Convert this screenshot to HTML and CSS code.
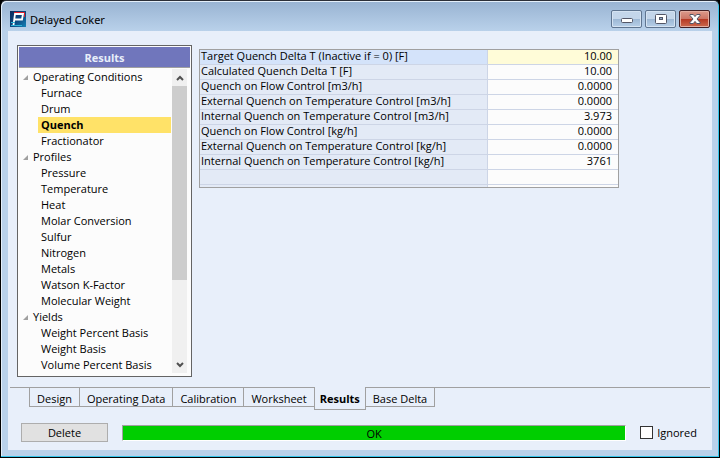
FILE: index.html
```html
<!DOCTYPE html>
<html lang="en">
<head>
<meta charset="utf-8">
<title>Delayed Coker</title>
<link rel="stylesheet" href="styles.css">
</head>
<body>
<div class="window">
  <header class="titlebar">
    <svg class="app-icon" viewBox="0 0 16 16" aria-hidden="true">
      <defs>
        <linearGradient id="appbg" x1="0" y1="0" x2="1" y2="1"><stop offset="0" stop-color="#0b2a5c"/><stop offset=".55" stop-color="#0d4a82"/><stop offset="1" stop-color="#1684b8"/></linearGradient>
      </defs>
      <rect width="16" height="16" fill="url(#appbg)"/>
      <path d="M4 1.500H14.500V6" fill="none" stroke="#e0202c" stroke-width="1"/>
      <path d="M3.500 14L5 3H13L12 8.500H5" fill="none" stroke="#fff" stroke-width="1.800"/>
      <path d="M1 14.500H12M1 11.500H5" fill="none" stroke="#2fb4d8" stroke-width="1"/>
    </svg>
    <h1 class="title">Delayed Coker</h1>
    <div class="controls">
      <button class="control" type="button" aria-label="Minimize">
        <svg viewBox="0 0 12 10"><rect x=".5" y="4.500" width="11" height="4" rx="1" fill="#fff" stroke="#535666"/></svg>
      </button>
      <button class="control" type="button" aria-label="Maximize">
        <svg viewBox="0 0 12 10"><rect x=".5" y=".5" width="11" height="9" rx="1" fill="#fff" stroke="#535666"/><rect x="4.500" y="3.500" width="3" height="2" fill="#8fabc9" stroke="#535666"/></svg>
      </button>
      <button class="control close" type="button" aria-label="Close">
        <svg viewBox="0 0 12 10"><path d="M1 .5H4.300L6 2.600 7.700 .5H11V1.500L8 5l3 3.500v1H7.700L6 7.400 4.300 9.500H1v-1L4 5 1 1.500Z" fill="#fff" stroke="#535666" stroke-width="1"/></svg>
      </button>
    </div>
  </header>

  <main class="client">
    <div class="workspace">
      <nav class="panel" aria-label="Results">
        <h2 class="panel-title">Results</h2>
        <div class="panel-body">
          <ul class="tree">
            <li class="group"><svg class="arrow" viewBox="0 0 5 5"><path d="M5 0V5H0Z" fill="#a0a0a0"/></svg>Operating Conditions</li>
            <li><a class="leaf" href="#furnace">Furnace</a></li>
            <li><a class="leaf" href="#drum">Drum</a></li>
            <li><a class="leaf selected" href="#quench" aria-current="page">Quench</a></li>
            <li><a class="leaf" href="#fractionator">Fractionator</a></li>
            <li class="group"><svg class="arrow" viewBox="0 0 5 5"><path d="M5 0V5H0Z" fill="#a0a0a0"/></svg>Profiles</li>
            <li><a class="leaf" href="#pressure">Pressure</a></li>
            <li><a class="leaf" href="#temperature">Temperature</a></li>
            <li><a class="leaf" href="#heat">Heat</a></li>
            <li><a class="leaf" href="#molar">Molar Conversion</a></li>
            <li><a class="leaf" href="#sulfur">Sulfur</a></li>
            <li><a class="leaf" href="#nitrogen">Nitrogen</a></li>
            <li><a class="leaf" href="#metals">Metals</a></li>
            <li><a class="leaf" href="#watson">Watson K-Factor</a></li>
            <li><a class="leaf" href="#molecular">Molecular Weight</a></li>
            <li class="group"><svg class="arrow" viewBox="0 0 5 5"><path d="M5 0V5H0Z" fill="#a0a0a0"/></svg>Yields</li>
            <li><a class="leaf" href="#weight-percent">Weight Percent Basis</a></li>
            <li><a class="leaf" href="#weight">Weight Basis</a></li>
            <li><a class="leaf" href="#volume-percent">Volume Percent Basis</a></li>
          </ul>
          <div class="scrollbar">
            <button class="scroll-button" type="button" aria-label="Scroll up"><svg viewBox="0 0 8 6"><path d="M1 5L4 2 7 5" fill="none" stroke="#505050" stroke-width="2"/></svg></button>
            <div class="track"><div class="thumb"></div></div>
            <button class="scroll-button" type="button" aria-label="Scroll down"><svg viewBox="0 0 8 6"><path d="M1 1L4 4 7 1" fill="none" stroke="#505050" stroke-width="2"/></svg></button>
          </div>
        </div>
      </nav>

      <table class="results">
        <tbody>
          <tr class="active"><th scope="row">Target Quench Delta T (Inactive if = 0) [F]</th><td>10.00</td></tr>
          <tr><th scope="row">Calculated Quench Delta T [F]</th><td>10.00</td></tr>
          <tr><th scope="row">Quench on Flow Control [m3/h]</th><td>0.0000</td></tr>
          <tr><th scope="row">External Quench on Temperature Control [m3/h]</th><td>0.0000</td></tr>
          <tr><th scope="row">Internal Quench on Temperature Control [m3/h]</th><td>3.973</td></tr>
          <tr><th scope="row">Quench on Flow Control [kg/h]</th><td>0.0000</td></tr>
          <tr><th scope="row">External Quench on Temperature Control [kg/h]</th><td>0.0000</td></tr>
          <tr><th scope="row">Internal Quench on Temperature Control [kg/h]</th><td>3761</td></tr>
          <tr><th></th><td></td></tr>
          <tr class="partial"><th></th><td></td></tr>
        </tbody>
      </table>
    </div>

    <div class="tabs" role="tablist">
      <button class="tab" type="button" role="tab">Design</button>
      <button class="tab" type="button" role="tab">Operating Data</button>
      <button class="tab" type="button" role="tab">Calibration</button>
      <button class="tab" type="button" role="tab">Worksheet</button>
      <button class="tab current" type="button" role="tab" aria-selected="true">Results</button>
      <button class="tab" type="button" role="tab">Base Delta</button>
    </div>

    <footer class="footer">
      <button class="delete" type="button">Delete</button>
      <div class="status" role="status">OK</div>
      <label class="ignored" for="ignored"><input id="ignored" type="checkbox">Ignored</label>
    </footer>
  </main>
</div>
</body>
</html>
```
FILE: styles.css
```css
* { box-sizing: border-box; }

body {
  margin: 0;
  background: #000;
  color: #000;
  font: 11px/16px "Open Sans", "Noto Sans", sans-serif;
}

button {
  padding: 0;
  font: inherit;
  color: inherit;
}

h1, h2, ul { margin: 0; padding: 0; }

.window {
  display: flex;
  flex-direction: column;
  min-height: 100vh;
  padding: 0 7px 7px;
  border: 1px solid #000;
  border-top-color: #2b2f38;
  border-radius: 6px 6px 0 0;
  background: linear-gradient(#98b3d2, #b9d1ea 30px, #b9d1ea);
  box-shadow: inset -1px -1px #35c5ea, inset 1px 1px #e4effa;
}

.titlebar {
  display: flex;
  align-items: flex-start;
  height: 30px;
  padding: 9px 2px 0;
}

.app-icon { width: 16px; height: 16px; margin-top: 1px; }

.title {
  flex: 1;
  margin-left: 4px;
  font-family: "Noto Sans", "Open Sans", sans-serif;
  font-size: 11px;
  font-weight: 400;
  line-height: 20px;
}

.controls { display: flex; gap: 3px; }

.control {
  display: flex;
  align-items: center;
  justify-content: center;
  width: 31px;
  height: 18px;
  border: 1px solid #5f7590;
  border-radius: 2px;
  background: linear-gradient(#c4d6ea 50%, #9cb7d4 50%, #b7cfe8);
  box-shadow: inset 0 0 0 1px #d5e3f2;
}

.control svg { width: 12px; height: 10px; }

.control.close {
  border-color: #431f24;
  background: linear-gradient(#dc9a8c, #cc7464 50%, #b53722 50%, #cc6a4e);
  box-shadow: inset 0 0 0 1px #e3ada0;
}

.client {
  flex: 1;
  display: flex;
  flex-direction: column;
  padding: 14px 2px 8px;
  background: #e8effa;
}

.workspace {
  flex: 1;
  display: flex;
  align-items: flex-start;
  gap: 7px;
  padding: 0 7px 10px;
}

.panel {
  width: 175px;
  padding: 1px;
  border: 1px solid #646464;
  background: #fcfcfc;
}

.panel-title {
  height: 21px;
  border-bottom: 1px solid #a0a0a0;
  background: #7076bc;
  color: #e8effa;
  font-size: 11px;
  font-weight: 700;
  line-height: 21px;
  text-align: center;
}

.panel-body {
  display: flex;
  padding: 1px 3px 2px 0;
}

.tree {
  flex: 1;
  list-style: none;
}

.group {
  display: flex;
  align-items: center;
  gap: 5px;
  padding-left: 4px;
}

.arrow { width: 5px; height: 5px; }

.leaf {
  display: block;
  margin: 0 1px 0 19px;
  padding-left: 3px;
  color: inherit;
  text-decoration: none;
}

.leaf.selected { background: #ffe268; font-weight: 700; }

.scrollbar {
  display: flex;
  flex-direction: column;
  width: 15px;
  background: #f0f0f0;
}

.scroll-button {
  display: flex;
  align-items: center;
  justify-content: center;
  height: 17px;
  border: 0;
  background: #f0f0f0;
}

.scroll-button svg { width: 8px; height: 6px; }

.track { flex: 1; }

.thumb { height: 72%; min-height: 194px; background: #cdcdcd; }

.results {
  width: 420px;
  margin-top: 4px;
  border: 1px solid #a0a0a0;
  border-spacing: 0;
  table-layout: fixed;
  line-height: 12px;
}

.results th, .results td {
  height: 15px;
  padding: 0 6px 2px 1px;
  border-bottom: 1px solid #cdd5e6;
  font-weight: 400;
  white-space: nowrap;
}

.results th {
  width: 288px;
  border-right: 1px solid #cdd5e6;
  background: #e3eaf6;
  text-align: left;
}

.results td { background: #fcfcfc; text-align: right; }

.results .active th { background: #d4e3fa; }
.results .active td { background: #fffcd8; }

.results .partial th, .results .partial td { height: 2px; border-bottom: 0; }

.tabs {
  display: flex;
  align-items: flex-start;
  height: 36px;
  padding-left: 19px;
  border-top: 1px solid #a0a0a0;
}

.tab {
  height: 19px;
  margin-right: -1px;
  padding: 4px 7px 0;
  border: 1px solid #a0a0a0;
  border-top: 0;
  background: #e8effa;
  line-height: 14px;
}

.tab.current {
  z-index: 1;
  height: 23px;
  margin-top: -1px;
  padding: 5px 5px 3px;
  font-weight: 700;
}

.footer {
  display: flex;
  align-items: center;
  gap: 14px;
  padding: 0 13px 0 11px;
}

.delete {
  width: 87px;
  height: 19px;
  border: 1px solid #adadad;
  background: #e1e1e1;
}

.status {
  flex: 1;
  height: 16px;
  border: 1px solid #a0a0a0;
  border-right-color: #fff;
  border-bottom-color: #fff;
  background: #00ce00;
  line-height: 15px;
  text-align: center;
}

.ignored {
  display: flex;
  align-items: center;
  gap: 4px;
}

.ignored input {
  appearance: none;
  width: 13px;
  height: 13px;
  margin: 0;
  border: 1px solid #333;
  background: #fff;
}

.ignored input:checked { background: #333; }
```
